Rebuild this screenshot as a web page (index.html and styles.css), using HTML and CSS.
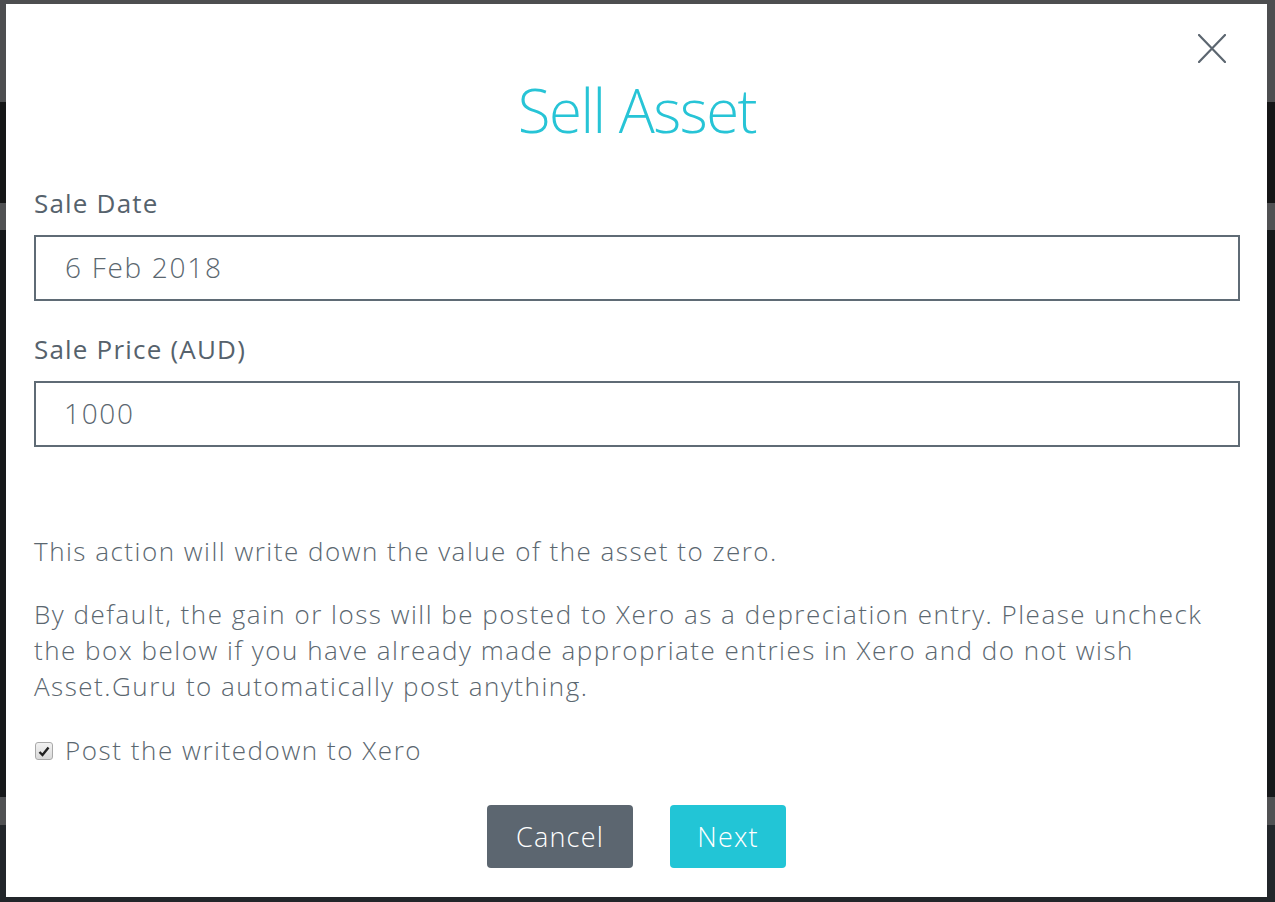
FILE: index.html
```html
<!DOCTYPE html>
<html lang="en">
<head>
<meta charset="utf-8">
<title>Sell Asset</title>
<link rel="stylesheet" href="styles.css">
</head>
<body>
<div class="backdrop">
  <div class="modal">
    <button class="close" aria-label="Close">
      <svg width="28" height="29" viewBox="0 0 28 29"><path d="M1 1 L27 28 M27 1 L1 28" stroke="#5c6670" stroke-width="2.2" fill="none" stroke-linecap="round"/></svg>
    </button>
    <h1 class="title">Sell Asset</h1>
    <form class="form">
      <label class="field-label">Sale Date</label>
      <div class="input date-input">6 Feb 2018</div>
      <label class="field-label second">Sale Price (AUD)</label>
      <div class="input">1000</div>
      <p class="note first-note">This action will write down the value of the asset to zero.</p>
      <p class="note second-note">By default, the gain or loss will be posted to Xero as a depreciation entry. Please uncheck the box below if you have already made appropriate entries in Xero and do not wish Asset.Guru to automatically post anything.</p>
      <div class="check-row">
        <span class="checkbox">
          <svg width="12" height="11" viewBox="0 0 12 11"><path d="M1.5 6 L4.5 9 L10.5 1.5" stroke="#222" stroke-width="2.4" fill="none"/></svg>
        </span>
        <span class="check-label">Post the writedown to Xero</span>
      </div>
      <div class="actions">
        <button type="button" class="btn btn-cancel">Cancel</button>
        <button type="button" class="btn btn-next">Next</button>
      </div>
    </form>
  </div>
</div>
</body>
</html>
```

FILE: styles.css
```css
html, body {
  margin: 0;
  padding: 0;
}
body {
  width: 1275px;
  height: 902px;
  overflow: hidden;
  font-family: "Open Sans", "Liberation Sans", sans-serif;
  background: linear-gradient(to bottom,
    #4d4e50 0px, #4d4e50 102px,
    #151617 102px, #151617 203px,
    #505153 203px, #505153 230px,
    #16181a 230px, #16181a 797px,
    #505153 797px, #505153 825px,
    #22262a 825px, #22262a 902px);
}
.backdrop {
  padding: 4px 8px 5px 6px;
}
.modal {
  position: relative;
  background: #ffffff;
  height: 893px;
  box-sizing: border-box;
  padding: 70px 27px 29px 28px;
  display: flex;
  flex-direction: column;
}
.close {
  position: absolute;
  top: 30px;
  right: 41px;
  width: 28px;
  height: 29px;
  padding: 0;
  border: 0;
  background: transparent;
  display: flex;
}
.title {
  margin: 0;
  text-align: center;
  font-size: 60px;
  line-height: 72px;
  font-weight: 300;
  letter-spacing: -1.5px;
  color: #27c4d6;
}
.form {
  display: flex;
  flex-direction: column;
  margin-top: 39px;
  flex: 1;
}
.field-label {
  font-size: 26px;
  line-height: 36px;
  font-weight: 400;
  letter-spacing: 1.2px;
  color: #56626c;
}
.field-label.second {
  margin-top: 30px;
}
.input {
  margin-top: 14px;
  height: 66px;
  box-sizing: border-box;
  border: 2px solid #5f6b75;
  display: flex;
  align-items: center;
  padding: 0 0 2px 28px;
  font-size: 28px;
  font-weight: 300;
  letter-spacing: 1.7px;
  color: #5b6770;
}
.date-input {
  padding-left: 29px;
}
.note {
  margin: 28px 0 0;
  font-size: 26px;
  line-height: 36px;
  font-weight: 300;
  letter-spacing: 1.5px;
  color: #5b6770;
}
.first-note {
  margin-top: 86px;
}
.second-note {
  margin-top: 27px;
}
.check-row {
  margin-top: 28px;
  display: flex;
  align-items: center;
  height: 36px;
}
.checkbox {
  width: 18px;
  height: 18px;
  box-sizing: border-box;
  border: 1px solid #a9a9a9;
  border-radius: 3px;
  background: linear-gradient(#f2f2f2, #d9d9d9);
  display: flex;
  align-items: center;
  justify-content: center;
  margin: 2px 12px 0 1px;
}
.check-label {
  font-size: 26px;
  font-weight: 300;
  letter-spacing: 1.55px;
  color: #5b6770;
}
.actions {
  margin-top: 37px;
  display: flex;
  justify-content: center;
  gap: 37px;
  padding-right: 1px;
}
.btn {
  height: 63px;
  border: 0;
  border-radius: 4px;
  font-family: inherit;
  font-size: 27px;
  font-weight: 300;
  letter-spacing: 1.2px;
  color: #ffffff;
  padding: 0;
}
.btn-cancel {
  width: 146px;
  background: #5c6670;
}
.btn-next {
  width: 116px;
  background: #22c5d6;
}
```
